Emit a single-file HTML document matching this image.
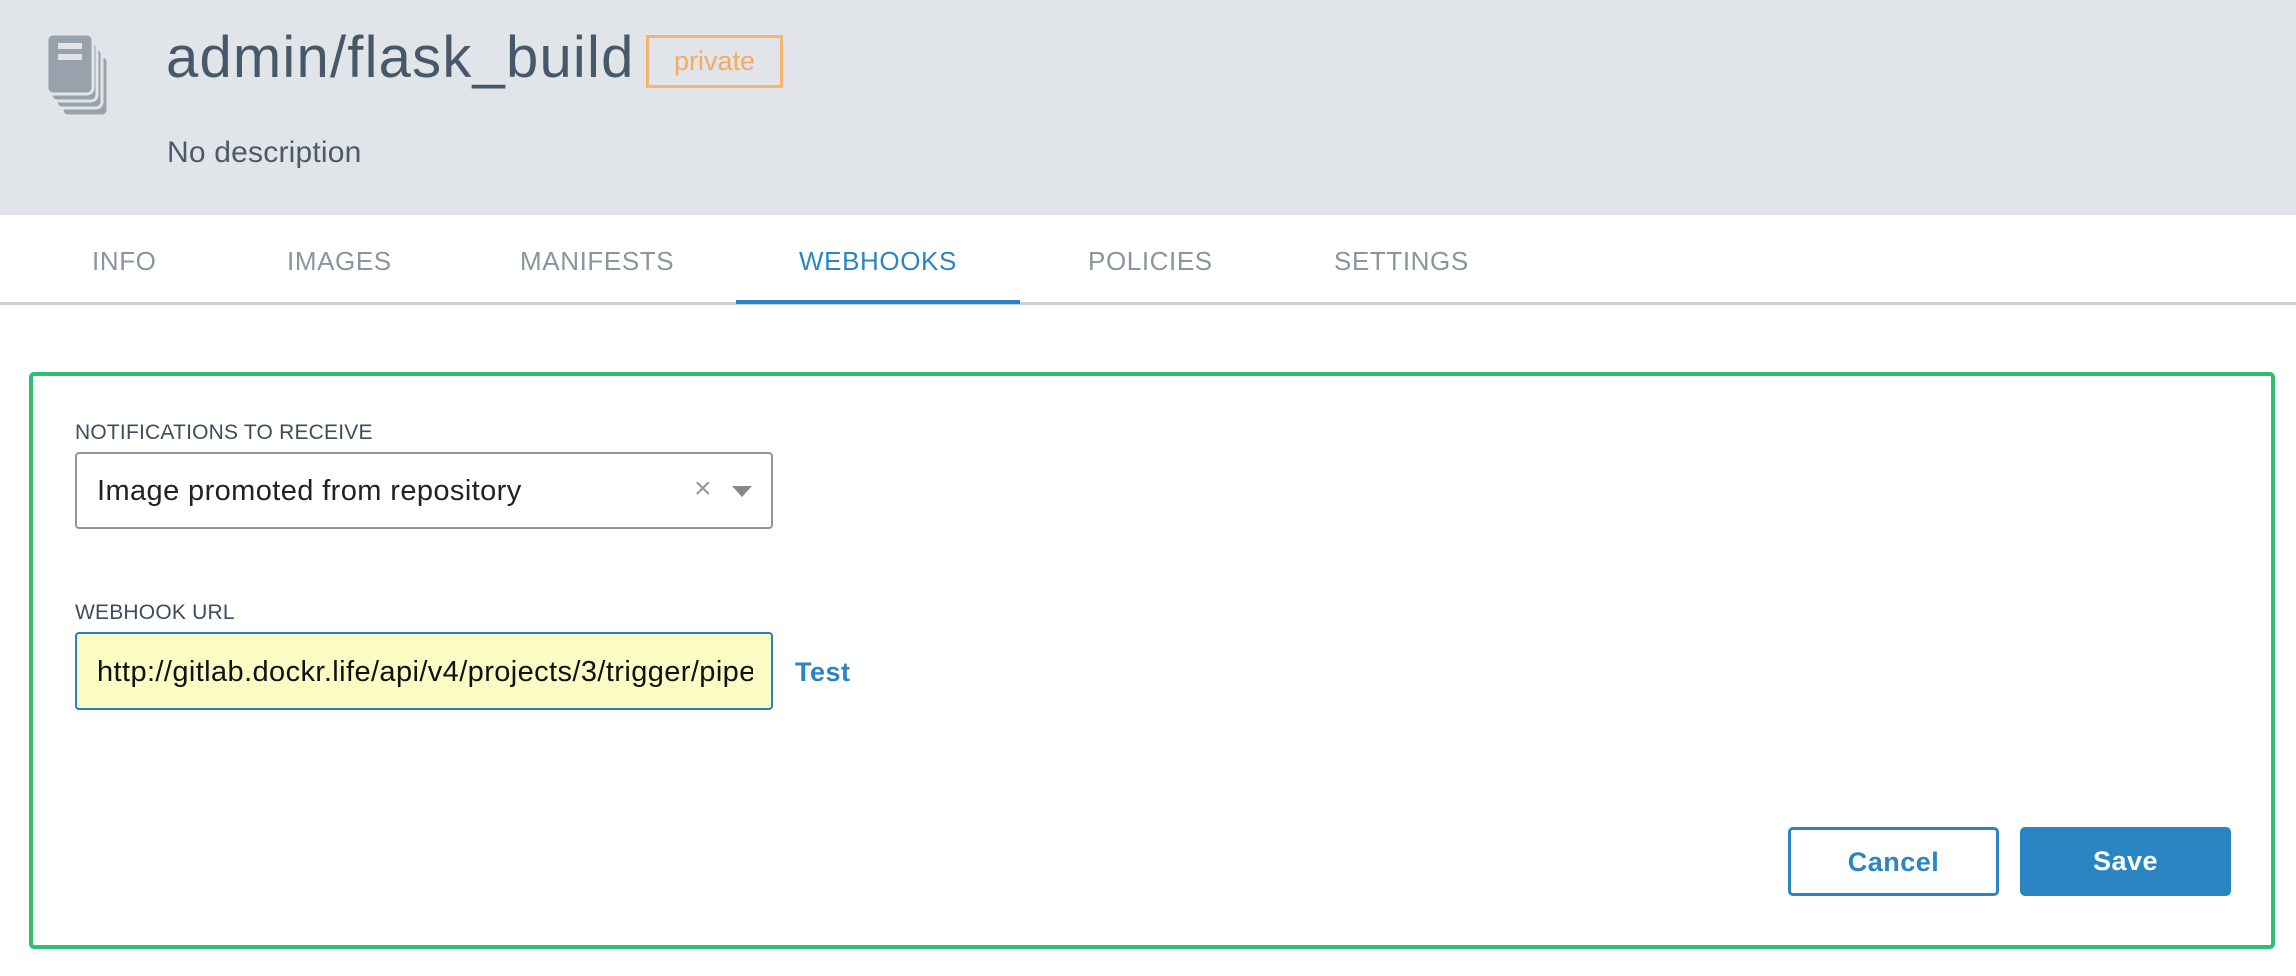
<!DOCTYPE html>
<html><head><meta charset="utf-8"><style>
*{margin:0;padding:0;box-sizing:border-box}
body{width:2296px;height:976px;background:#fff;font-family:"Liberation Sans",sans-serif;position:relative;overflow:hidden}
.hdr{position:absolute;left:0;top:0;width:2296px;height:215px;background:#e1e5e9}
.abs{position:absolute;white-space:nowrap}
.title{left:166px;top:24px;font-size:58px;color:#465869;letter-spacing:1.2px}
.badge{left:646px;top:35px;width:137px;height:53px;border:3px solid #f7b470;color:#f5aa5f;font-size:27px;text-align:center;line-height:47px}
.desc{left:167px;top:136px;font-size:30px;color:#4a5a6a;letter-spacing:0.2px}
.tab{top:246px;font-size:26px;color:#8a959e;letter-spacing:0.6px}
.tb{position:absolute;left:0;top:302px;width:2296px;height:3px;background:#c8cfd4}
.ul{position:absolute;left:736px;top:300px;width:284px;height:4px;background:#2a85c2}
.box{position:absolute;left:29px;top:372px;width:2246px;height:577px;border:4px solid #2fbf71;border-radius:5px}
.lbl{font-size:21px;color:#3d4d5c;left:75px;letter-spacing:0.2px}
.sel{position:absolute;left:75px;top:452px;width:698px;height:77px;border:2px solid #8f989f;border-radius:4px}
.inp{position:absolute;left:75px;top:632px;width:698px;height:78px;border:2px solid #2a7fbf;border-radius:4px;background:#fafcc4;overflow:hidden}
.btn{position:absolute;top:827px;width:211px;height:69px;border-radius:5px;font-size:27px;font-weight:bold;text-align:center;line-height:65px;letter-spacing:0.5px}
</style></head><body>
<div class="hdr"></div>
<svg class="abs" style="left:46px;top:32px" width="66" height="86" viewBox="0 0 66 86">
<g fill="#97a2ac" stroke="#e1e5e9" stroke-width="3">
<rect x="16" y="24" width="46" height="60" rx="6"/>
<rect x="10" y="16" width="46" height="60" rx="6"/>
<rect x="5" y="9" width="46" height="60" rx="6"/>
<rect x="1" y="2" width="46" height="60" rx="6"/>
</g>
<rect x="12" y="11" width="24" height="6" fill="#e1e5e9"/>
<rect x="12" y="22" width="24" height="6" fill="#e1e5e9"/>
</svg>
<div class="abs title">admin/flask_build</div>
<div class="abs badge">private</div>
<div class="abs desc">No description</div>
<div class="abs tab" style="left:92px">INFO</div>
<div class="abs tab" style="left:287px">IMAGES</div>
<div class="abs tab" style="left:520px">MANIFESTS</div>
<div class="abs tab" style="left:799px;color:#2a85c2">WEBHOOKS</div>
<div class="abs tab" style="left:1088px">POLICIES</div>
<div class="abs tab" style="left:1334px">SETTINGS</div>
<div class="tb"></div><div class="ul"></div>
<div class="box"></div>
<div class="abs lbl" style="top:421px">NOTIFICATIONS TO RECEIVE</div>
<div class="sel"></div>
<div class="abs" style="left:97px;top:475px;font-size:29px;color:#222;letter-spacing:0.4px">Image promoted from repository</div>
<div class="abs" style="left:694px;top:472px;font-size:30px;color:#999">×</div>
<svg class="abs" style="left:732px;top:486px" width="20" height="12"><path d="M0 0H20L10 11Z" fill="#888"/></svg>
<div class="abs lbl" style="top:601px">WEBHOOK URL</div>
<div class="inp"><div class="abs" style="left:20px;top:22px;font-size:29px;color:#111;width:656px;overflow:hidden;letter-spacing:0.4px">http://gitlab.dockr.life/api/v4/projects/3/trigger/pipeline</div></div>
<div class="abs" style="left:795px;top:657px;font-size:27px;font-weight:bold;color:#2a85c2;letter-spacing:0.5px">Test</div>
<div class="btn" style="left:1788px;border:3px solid #2a85c2;color:#2a85c2">Cancel</div>
<div class="btn" style="left:2020px;background:#2a85c2;color:#fff;line-height:69px">Save</div>
</body></html>
